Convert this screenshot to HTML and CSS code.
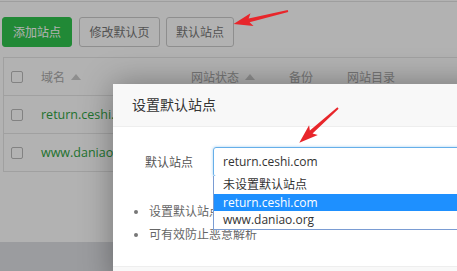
FILE: index.html
```html
<!DOCTYPE html>
<html>
<head>
<meta charset="utf-8">
<link rel="stylesheet" href="styles.css">
</head>
<body>
<div class="main">
  <div class="page-top"></div>
  <div class="toolbar">
    <button class="btn btn-green">添加站点</button>
    <button class="btn btn-page">修改默认页</button>
    <button class="btn btn-site">默认站点</button>
  </div>
  <div class="table">
    <div class="row head">
      <div class="cell"><span class="check"></span></div>
      <div class="cell">域名<span class="sort"></span></div>
      <div class="cell">网站状态<span class="sort"></span></div>
      <div class="cell">备份</div>
      <div class="cell">网站目录</div>
    </div>
    <div class="row">
      <div class="cell"><span class="check"></span></div>
      <div class="cell link">return.ceshi.com</div>
      <div class="cell"></div>
      <div class="cell"></div>
      <div class="cell"></div>
    </div>
    <div class="row">
      <div class="cell"><span class="check"></span></div>
      <div class="cell link">www.daniao.org</div>
      <div class="cell"></div>
      <div class="cell"></div>
      <div class="cell"></div>
    </div>
  </div>
</div>

<div class="shade"></div>

<div class="dialog">
  <div class="dialog-title">设置默认站点</div>
  <div class="dialog-body">
    <div class="form-line">
      <span class="label">默认站点</span>
      <div class="select">return.ceshi.com</div>
    </div>
    <ul class="tips">
      <li>设置默认站点后,未绑定的域名将访问默认站点</li>
      <li>可有效防止恶意解析</li>
    </ul>
  </div>
  <div class="dialog-foot"></div>
  <div class="dropdown">
    <div class="opt">未设置默认站点</div>
    <div class="opt sel">return.ceshi.com</div>
    <div class="opt">www.daniao.org</div>
  </div>
</div>

<svg class="arrows" width="457" height="271" viewBox="0 0 457 271">
  <g transform="translate(288 11) rotate(166.5)">
    <polygon points="0,-0.9 40,-2 37,-6.5 56,0 37,6.5 40,2 0,0.9" fill="#e8262b"/>
  </g>
  <g transform="translate(338 108) rotate(138.1)">
    <polygon points="0,-0.9 36,-2 33,-6.5 52,0 33,6.5 36,2 0,0.9" fill="#e8262b"/>
  </g>
</svg>
</body>
</html>
```

FILE: styles.css
```css
html, body {
  margin: 0;
  padding: 0;
  overflow: hidden;
  width: 457px;
  height: 271px;
}
body {
  background: #dfe0e4;
  font-family: "Open Sans", "Noto Sans CJK SC", sans-serif;
  font-size: 12px;
  position: relative;
}
.main {
  background: #fff;
  height: 242px;
}
.page-top {
  height: 1px;
  border-bottom: 1px solid #e2e2e2;
}
.toolbar {
  display: flex;
  gap: 6px;
  margin-top: 15px;
  padding-left: 2px;
}
.btn {
  height: 30px;
  padding: 0;
  border: 1px solid #ccc;
  border-radius: 3px;
  background: #fff;
  color: #777;
  font: inherit;
  font-size: 12px;
}
.btn-green {
  width: 70px;
  background: #30c54e;
  border-color: #30c54e;
  color: #fff;
  margin-right: 1px;
}
.btn-page {
  width: 81px;
}
.btn-site {
  width: 68px;
}
.table {
  margin: 10px 0 0 3px;
  width: 600px;
  border: 1px solid #e6e6e6;
  border-bottom: none;
}
.row {
  display: grid;
  grid-template-columns: 37px 150px 98px 58px 1fr;
  height: 37px;
  border-bottom: 1px solid #e6e6e6;
  align-items: center;
  color: #aaa;
}
.cell {
  display: flex;
  align-items: center;
}
.cell:first-child {
  padding-left: 7px;
}
.check {
  width: 10px;
  height: 10px;
  border: 1px solid #bbb;
  border-radius: 2px;
  background: #fff;
}
.sort {
  width: 0;
  height: 0;
  border-left: 5px solid transparent;
  border-right: 5px solid transparent;
  border-bottom: 6px solid #ccc;
  margin-left: 6px;
}
.link {
  color: #2fa444;
  font-size: 12.5px;
}
.shade {
  position: absolute;
  inset: 0;
  background: rgba(0, 0, 0, 0.3);
}
.dialog {
  position: absolute;
  left: 113px;
  top: 84px;
  width: 420px;
  height: 200px;
  background: #fff;
  box-shadow: 0 0 30px rgba(0, 0, 0, 0.35);
}
.dialog-title {
  height: 42px;
  line-height: 42px;
  padding-left: 19px;
  background: #f8f8f8;
  border-bottom: 1px solid #eee;
  font-size: 14px;
  color: #333;
}
.dialog-body {
  height: 139px;
  padding-top: 20px;
  box-sizing: border-box;
}
.form-line {
  display: flex;
  align-items: center;
}
.label {
  width: 100px;
  padding-left: 32px;
  box-sizing: border-box;
  color: #555;
}
.select {
  flex: 1;
  height: 28px;
  line-height: 28px;
  border: 1px solid #66afe9;
  border-radius: 3px;
  box-shadow: 0 0 3px rgba(102, 175, 233, 0.6);
  padding-left: 9px;
  color: #333;
}
.tips {
  margin: 23px 0 0;
  padding-left: 36px;
  color: #666;
  line-height: 23px;
}
.tips li {
  white-space: nowrap;
}
.tips li::marker {
  color: #777;
  font-size: 11px;
}
.dialog-foot {
  height: 40px;
  background: #f8f8f8;
  border-top: 1px solid #eee;
}
.dropdown {
  position: absolute;
  left: 100px;
  top: 92px;
  width: 400px;
  background: #fff;
  border: 1px solid #7a9cd3;
  border-top: none;
  color: #333;
}
.opt {
  height: 17.5px;
  line-height: 17.5px;
  padding-left: 9px;
}
.opt.sel {
  background: #1e90ff;
  color: #fff;
}
.arrows {
  position: absolute;
  left: 0;
  top: 0;
}
```
